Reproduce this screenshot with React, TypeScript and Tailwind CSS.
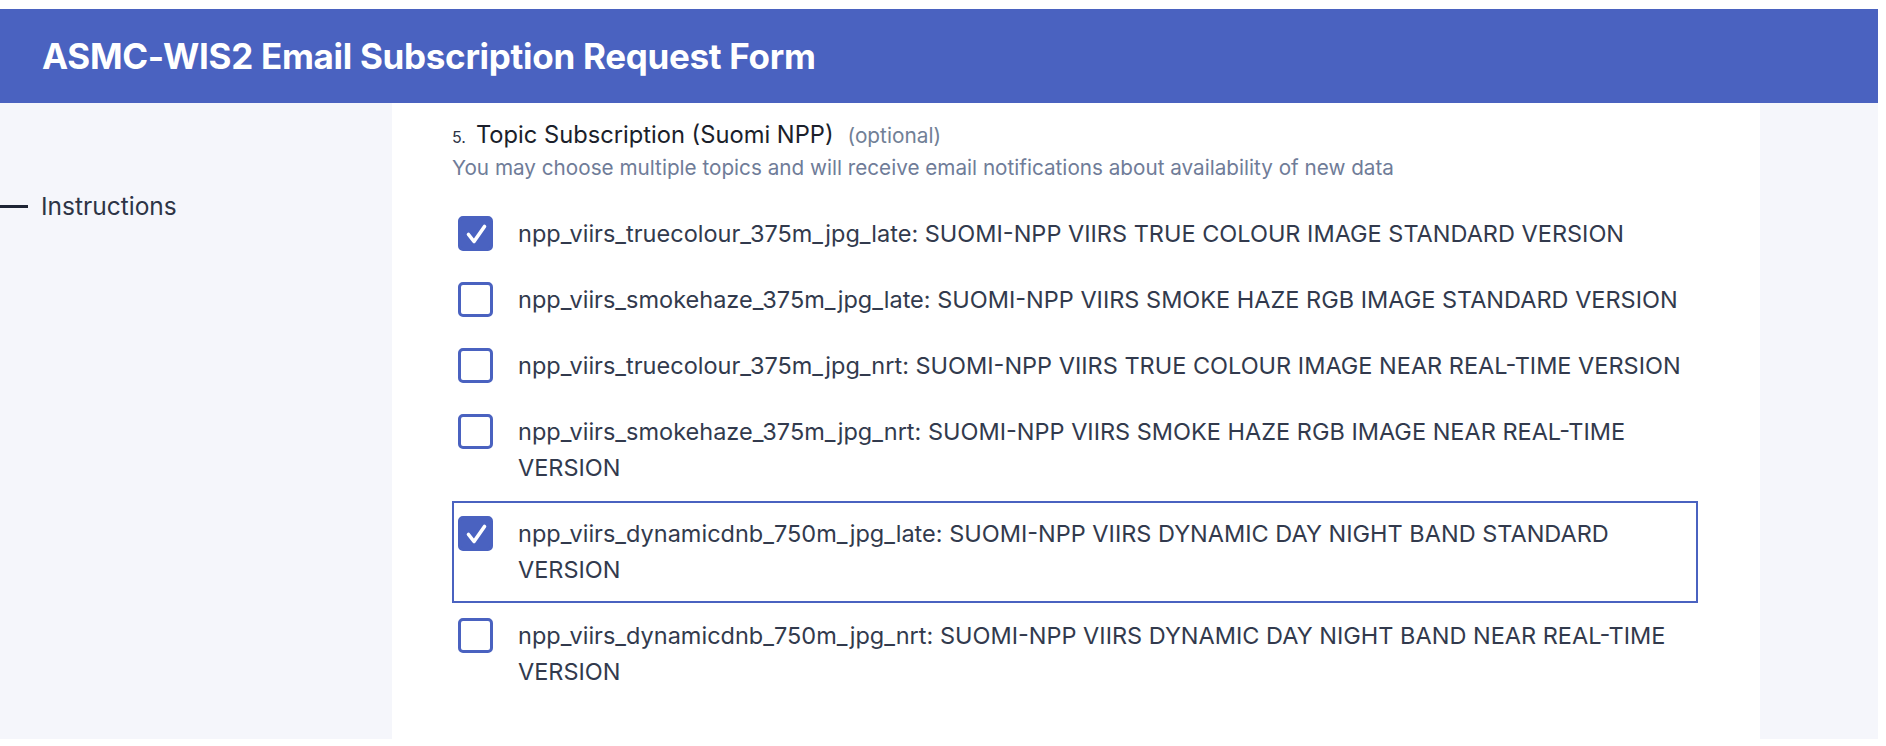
import React from 'react';

interface Topic {
  id: string;
  label: string;
  checked: boolean;
  focused?: boolean;
}

const topics: Topic[] = [
  { id: 'npp_viirs_truecolour_375m_jpg_late', label: 'SUOMI-NPP VIIRS TRUE COLOUR IMAGE STANDARD VERSION', checked: true },
  { id: 'npp_viirs_smokehaze_375m_jpg_late', label: 'SUOMI-NPP VIIRS SMOKE HAZE RGB IMAGE STANDARD VERSION', checked: false },
  { id: 'npp_viirs_truecolour_375m_jpg_nrt', label: 'SUOMI-NPP VIIRS TRUE COLOUR IMAGE NEAR REAL-TIME VERSION', checked: false },
  { id: 'npp_viirs_smokehaze_375m_jpg_nrt', label: 'SUOMI-NPP VIIRS SMOKE HAZE RGB IMAGE NEAR REAL-TIME VERSION', checked: false },
  { id: 'npp_viirs_dynamicdnb_750m_jpg_late', label: 'SUOMI-NPP VIIRS DYNAMIC DAY NIGHT BAND STANDARD VERSION', checked: true, focused: true },
  { id: 'npp_viirs_dynamicdnb_750m_jpg_nrt', label: 'SUOMI-NPP VIIRS DYNAMIC DAY NIGHT BAND NEAR REAL-TIME VERSION', checked: false },
];

const Checkbox: React.FC<{ checked: boolean }> = ({ checked }) => (
  <span
    className={`flex h-[35px] w-[35px] shrink-0 items-center justify-center rounded-[5px] border-[3px] border-[#4a62c0] ${
      checked ? 'bg-[#4a62c0]' : 'bg-white'
    }`}
  >
    {checked && (
      <svg viewBox="0 0 29 29" className="h-[29px] w-[29px]" fill="none" stroke="white" strokeWidth="3.6" strokeLinecap="round" strokeLinejoin="round">
        <path d="M7.5 15.5l5.5 7 10.5-15" />
      </svg>
    )}
  </span>
);

export default function App() {
  return (
    <div className="min-h-screen bg-white pt-[9px] font-['Inter',sans-serif]">
      <div className="w-[1878px]">
        <header className="flex h-[94px] items-center bg-[#4a62c0] pl-[42px]">
          <h1 className="text-[35px] font-bold tracking-[-0.3px] text-white">ASMC-WIS2 Email Subscription Request Form</h1>
        </header>

        <div className="flex h-[636px]">
          <aside className="w-[392px] shrink-0 bg-[#f5f6fb] pt-[88px]">
            <div className="flex items-center gap-[13px] text-[24.5px] leading-[30px] text-[#2d3446]">
              <span className="h-[3px] w-[28px] bg-[#1f2535]" />
              Instructions
            </div>
          </aside>

          <main className="flex-1 bg-white pl-[60px] pr-[62px] pt-[16px]">
            <div className="flex items-baseline leading-[32px]">
              <span className="mr-[10px] text-[16px] text-[#2d3446]">5.</span>
              <span className="text-[23.7px] text-[#1b1f2b]">Topic Subscription (Suomi NPP)</span>
              <span className="ml-[14px] text-[20.8px] text-[#718096]">(optional)</span>
            </div>
            <p className="text-[20.7px] leading-[30px] text-[#6f7c98]">
              You may choose multiple topics and will receive email notifications about availability of new data
            </p>

            <div className="mt-[18px] flex flex-col">
              {topics.map((t) => (
                <label
                  key={t.id}
                  className={`flex items-start gap-[25px] border-2 px-[4px] py-[13px] ${
                    t.focused ? 'border-[#4a62c0]' : 'border-transparent'
                  }`}
                >
                  <Checkbox checked={t.checked} />
                  <span className="text-[23.5px] leading-[36px] text-[#323a4d]">
                    {t.id}: {t.label}
                  </span>
                </label>
              ))}
            </div>
          </main>

          <aside className="w-[118px] shrink-0 bg-[#f5f6fb]" />
        </div>
      </div>
    </div>
  );
}
